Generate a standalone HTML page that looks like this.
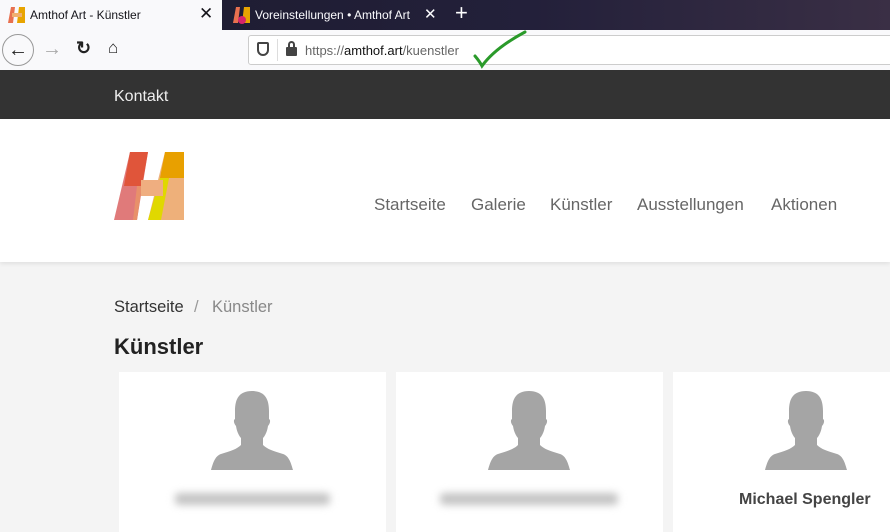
<!DOCTYPE html>
<html><head><meta charset="utf-8"><style>
*{margin:0;padding:0;box-sizing:border-box}
body{width:890px;height:526px;overflow:hidden;background:#f4f4f4;font-family:"Liberation Sans",sans-serif;position:relative}
.abs{position:absolute}
.nav span{position:absolute;white-space:nowrap}
</style></head><body>
<!-- tab strip -->
<div class="abs" style="left:0;top:0;width:890px;height:30px;background:linear-gradient(90deg,#1c1b2e 0%,#23203a 60%,#3a2f45 100%)"></div>
<div class="abs" style="left:0;top:0;width:222px;height:30px;background:#f9f9fb"></div>
<svg class="abs" style="left:8px;top:7px" width="17" height="16" viewBox="0 0 17 16"><polygon points="3,0 7,0 5,16 0,16" fill="#e8704f"/><polygon points="11,0 17,0 17,16 9,16" fill="#e8a400"/><rect x="4" y="6" width="10" height="4" fill="#f0b070"/></svg>
<div class="abs" style="left:30px;top:8px;font-size:12px;color:#15141a">Amthof Art - Künstler</div>
<div class="abs" style="left:199px;top:4px;font-size:17px;color:#15141a">✕</div>
<svg class="abs" style="left:233px;top:7px" width="17" height="17" viewBox="0 0 17 17"><polygon points="3,0 7,0 5,16 0,16" fill="#e8704f"/><polygon points="11,0 17,0 17,16 9,16" fill="#e8a400"/><circle cx="9" cy="13" r="4" fill="#d8246a"/></svg>
<div class="abs" style="left:255px;top:8px;font-size:12px;color:#fbfbfe">Voreinstellungen • Amthof Art</div>
<div class="abs" style="left:424px;top:5px;font-size:15px;color:#fbfbfe">✕</div>
<div class="abs" style="left:455px;top:0px;font-size:22px;color:#fff">+</div>
<!-- nav bar -->
<div class="abs" style="left:0;top:30px;width:890px;height:40px;background:#f9f9fb"></div>
<div class="abs" style="left:2px;top:34px;width:32px;height:32px;border:1px solid #999;border-radius:50%;text-align:center;line-height:30px;font-size:20px;color:#222">←</div>
<div class="abs" style="left:42px;top:38px;font-size:20px;color:#aaa">→</div>
<div class="abs" style="left:76px;top:38px;font-size:18px;color:#222;font-weight:bold">↻</div>
<div class="abs" style="left:108px;top:38px;font-size:17px;color:#222">⌂</div>
<div class="abs" style="left:248px;top:35px;width:650px;height:30px;background:#fff;border:1px solid #ccc;border-radius:3px"></div>
<div class="abs" style="left:257px;top:42px;width:12px;height:14px;border:2px solid #444;border-radius:2px 2px 6px 6px"></div>
<div class="abs" style="left:277px;top:39px;width:1px;height:22px;background:#ddd"></div>
<div class="abs" style="left:286px;top:47px;width:11px;height:9px;background:#444;border-radius:1px"></div>
<div class="abs" style="left:288px;top:41px;width:7px;height:8px;border:2px solid #444;border-bottom:none;border-radius:4px 4px 0 0"></div>
<div class="abs" style="left:305px;top:43px;font-size:13px;color:#666">https://<span style="color:#111">amthof.art</span>/kuenstler</div>
<svg class="abs" style="left:470px;top:28px" width="60" height="42"><path d="M5 28 Q10 34 12 38 Q25 20 55 4" stroke="#2a9a2a" stroke-width="3" fill="none" stroke-linecap="round"/></svg>
<!-- dark top bar -->
<div class="abs" style="left:0;top:70px;width:890px;height:49px;background:#333"></div>
<div class="abs" style="left:114px;top:88px;font-size:16px;color:#eee">Kontakt</div>
<!-- header -->
<div class="abs" style="left:0;top:119px;width:890px;height:143px;background:#fff;box-shadow:0 2px 4px rgba(0,0,0,.08)"></div>
<svg class="abs" style="left:113px;top:150px" width="72" height="72" viewBox="0 0 72 72">
<polygon points="17,2 35,2 24,70 1,70" fill="#e07a7a"/>
<polygon points="17,2 35,2 29,36 11,36" fill="#e0553a"/>
<polygon points="24,36 29,36 24,70 20,70" fill="#e8906a"/>
<polygon points="52,2 71,2 71,70 35,70" fill="#eeb07a"/>
<polygon points="52,2 71,2 71,28 47,28" fill="#e8a000"/>
<polygon points="47,28 56,28 48,70 35,70" fill="#e0d800"/>
<rect x="28" y="30" width="22" height="16" fill="#efae80"/>
</svg>
<div class="abs nav" style="left:0;top:195px;font-size:17px;color:#666;width:890px">
<span style="left:374px">Startseite</span><span style="left:471px">Galerie</span><span style="left:550px">Künstler</span><span style="left:637px">Ausstellungen</span><span style="left:771px">Aktionen</span></div>
<!-- breadcrumb -->
<div class="abs" style="left:114px;top:298px;font-size:16.5px;color:#333">Startseite</div>
<div class="abs" style="left:194px;top:298px;font-size:16.5px;color:#999">/</div>
<div class="abs" style="left:212px;top:298px;font-size:16.5px;color:#888">Künstler</div>
<div class="abs" style="left:114px;top:334px;font-size:22px;font-weight:bold;color:#222">Künstler</div>
<!-- cards -->
<div class="abs" style="left:119px;top:372px;width:267px;height:160px;background:#fff"></div>
<div class="abs" style="left:396px;top:372px;width:267px;height:160px;background:#fff"></div>
<div class="abs" style="left:673px;top:372px;width:230px;height:160px;background:#fff"></div>
<svg class="abs" style="left:211px;top:391px" width="82" height="80" viewBox="0 0 82 80"><path d="M41 0 C28 0 24 8 24 20 L24 28 C22 29 23 33 25 35 C26 42 29 46 30 47 L30 54 C26 58 20 60 10 63 C4 65 2 72 0 79 L82 79 C80 72 78 65 72 63 C62 60 56 58 52 54 L52 47 C53 46 56 42 57 35 C59 33 60 29 58 28 L58 20 C58 8 54 0 41 0Z" fill="#a5a5a5"/></svg>
<svg class="abs" style="left:488px;top:391px" width="82" height="80" viewBox="0 0 82 80"><path d="M41 0 C28 0 24 8 24 20 L24 28 C22 29 23 33 25 35 C26 42 29 46 30 47 L30 54 C26 58 20 60 10 63 C4 65 2 72 0 79 L82 79 C80 72 78 65 72 63 C62 60 56 58 52 54 L52 47 C53 46 56 42 57 35 C59 33 60 29 58 28 L58 20 C58 8 54 0 41 0Z" fill="#a5a5a5"/></svg>
<svg class="abs" style="left:765px;top:391px" width="82" height="80" viewBox="0 0 82 80"><path d="M41 0 C28 0 24 8 24 20 L24 28 C22 29 23 33 25 35 C26 42 29 46 30 47 L30 54 C26 58 20 60 10 63 C4 65 2 72 0 79 L82 79 C80 72 78 65 72 63 C62 60 56 58 52 54 L52 47 C53 46 56 42 57 35 C59 33 60 29 58 28 L58 20 C58 8 54 0 41 0Z" fill="#a5a5a5"/></svg>
<div class="abs" style="left:175px;top:493px;width:155px;height:12px;background:#c4c4c4;filter:blur(4px);border-radius:4px"></div>
<div class="abs" style="left:440px;top:493px;width:178px;height:12px;background:#c4c4c4;filter:blur(4px);border-radius:4px"></div>
<div class="abs" style="left:739px;top:491px;font-size:16px;font-weight:bold;color:#444">Michael Spengler</div>
</body></html>
